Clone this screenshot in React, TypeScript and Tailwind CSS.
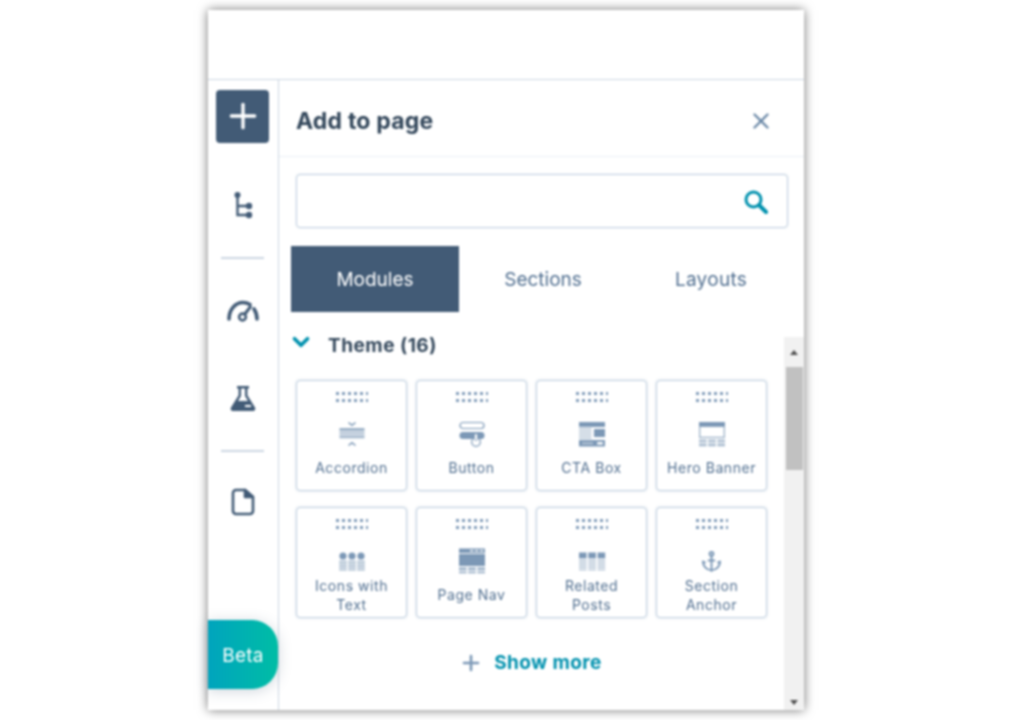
import { X, Plus, ChevronDown, Anchor } from "lucide-react";
import type { ReactNode } from "react";

const Dots = () => (
  <svg width="33" height="11" viewBox="0 0 33 11" fill="#7c98b6">
    {[0, 1].map((r) =>
      [0, 1, 2, 3, 4, 5].map((c) => (
        <rect key={`${r}-${c}`} x={c * 6 + 1} y={r * 7 + 1} width="3" height="3" rx="0.6" />
      ))
    )}
  </svg>
);

const Ic = ({ children }: { children: ReactNode }) => (
  <svg width="28" height="28" viewBox="0 0 28 28" fill="#7c98b6">
    {children}
  </svg>
);

const AccordionIcon = () => (
  <Ic>
    <path d="M10.500 2.500l3.500 2.800 3.500-2.800" fill="none" stroke="#7c98b6" strokeWidth="1.6" />
    <rect x="1.5" y="8" width="25" height="3" opacity=".75" />
    <rect x="1.5" y="11.8" width="25" height="2.4" opacity=".6" />
    <rect x="1.5" y="15" width="25" height="3.4" opacity=".6" />
    <path d="M10.500 25.500l3.500-2.800 3.500 2.800" fill="none" stroke="#7c98b6" strokeWidth="1.6" />
  </Ic>
);
const ButtonIcon = () => (
  <Ic>
    <rect x="2" y="2.5" width="24" height="6" rx="3" fill="none" stroke="#7c98b6" strokeWidth="1.2" />
    <rect x="1.500" y="12" width="25" height="7" rx="3.500" />
    <circle cx="18" cy="22" r="4.300" fill="#fff" stroke="#7c98b6" strokeWidth="1.2" />
    <rect x="16.500" y="13.500" width="3" height="7" rx="1.500" fill="#fff" stroke="#7c98b6" strokeWidth="0.8" />
  </Ic>
);
const CtaIcon = () => (
  <Ic>
    <rect x="1" y="2" width="26" height="5" />
    <rect x="1" y="8" width="12.5" height="1.6" opacity=".6" />
    <rect x="1" y="11" width="12.5" height="1.6" opacity=".6" />
    <rect x="1" y="14" width="12.5" height="1.6" opacity=".6" />
    <rect x="1" y="17" width="12.5" height="1.6" opacity=".6" />
    <rect x="16" y="9" width="11" height="8" />
    <path d="M1 20h26v6.5H1z" />
    <rect x="4" y="22.5" width="11" height="1.6" fill="#fff" opacity=".5" />
    <rect x="19" y="22" width="6" height="2.4" rx="1" fill="#fff" />
  </Ic>
);
const HeroIcon = () => (
  <Ic>
    <rect x="1" y="2" width="26" height="4.4" />
    <rect x="1.7" y="6.4" width="24.6" height="11" fill="none" stroke="#7c98b6" strokeWidth="1.3" opacity=".75" />
    <rect x="1" y="19.5" width="7.6" height="2.8" opacity=".6" />
    <rect x="10.2" y="19.5" width="7.6" height="2.8" opacity=".6" />
    <rect x="19.4" y="19.5" width="7.6" height="2.8" opacity=".6" />
    <rect x="1" y="23.4" width="7.6" height="3" opacity=".6" />
    <rect x="10.2" y="23.4" width="7.6" height="3" opacity=".6" />
    <rect x="19.4" y="23.4" width="7.6" height="3" opacity=".6" />
  </Ic>
);
const IconsTextIcon = () => (
  <Ic>
    {[5, 14, 23].map((x) => (
      <g key={x}>
        <circle cx={x} cy="9" r="3.6" />
        <rect x={x - 3.8} y="13.6" width="7.6" height="2" opacity=".6" />
        <rect x={x - 3.8} y="16.4" width="7.6" height="2" opacity=".6" />
        <rect x={x - 3.8} y="19.2" width="7.6" height="2" opacity=".6" />
        <rect x={x - 3.8} y="22" width="7.6" height="1.6" opacity=".6" />
      </g>
    ))}
  </Ic>
);
const PageNavIcon = () => (
  <Ic>
    <rect x="1" y="1.5" width="26" height="4.5" />
    <rect x="12" y="3" width="3.4" height="1.4" fill="#fff" />
    <rect x="17" y="3" width="3.4" height="1.4" fill="#fff" />
    <rect x="22" y="3" width="3.4" height="1.4" fill="#fff" />
    <rect x="1" y="7" width="26" height="12" />
    <rect x="1" y="20.5" width="7.6" height="2.5" opacity=".8" />
    <rect x="10.2" y="20.5" width="7.6" height="2.5" opacity=".8" />
    <rect x="19.4" y="20.5" width="7.6" height="2.5" opacity=".8" />
    <rect x="1" y="24" width="7.6" height="2.5" opacity=".6" />
    <rect x="10.2" y="24" width="7.6" height="2.5" opacity=".6" />
    <rect x="19.4" y="24" width="7.6" height="2.5" opacity=".6" />
  </Ic>
);
const RelatedIcon = () => (
  <Ic>
    {[1, 10.3, 19.6].map((x) => (
      <g key={x}>
        <rect x={x} y="5.5" width="7.6" height="6" />
        <rect x={x} y="13" width="7.6" height="1.7" opacity=".6" />
        <rect x={x} y="16" width="7.6" height="1.7" opacity=".6" />
        <rect x={x} y="19" width="7.6" height="1.7" opacity=".6" />
        <rect x={x} y="22" width="7.6" height="1.3" opacity=".6" />
      </g>
    ))}
  </Ic>
);
const AnchorIcon = () => <Anchor size={23} strokeWidth={2} className="text-[#7c98b6]" />;

const items: { label: ReactNode; icon: ReactNode }[] = [
  { label: "Accordion", icon: <AccordionIcon /> },
  { label: "Button", icon: <ButtonIcon /> },
  { label: "CTA Box", icon: <CtaIcon /> },
  { label: "Hero Banner", icon: <HeroIcon /> },
  { label: <>Icons with<br />Text</>, icon: <IconsTextIcon /> },
  { label: "Page Nav", icon: <PageNavIcon /> },
  { label: <>Related<br />Posts</>, icon: <RelatedIcon /> },
  { label: <>Section<br />Anchor</>, icon: <AnchorIcon /> },
];

const Card = ({ label, icon }: { label: ReactNode; icon: ReactNode }) => (
  <div className="h-[111px] w-[111px] rounded-[4px] border border-[#bfcfe0] bg-white shadow-[0_0_3px_rgba(124,152,182,0.3)] flex flex-col items-center pt-[10px]">
    <Dots />
    <div className="mt-[18px] h-[28px] flex items-center justify-center">{icon}</div>
    <div className="flex-1 flex items-center justify-center text-center text-[14px] leading-[19px] tracking-[0.55px] text-[#516f90] pb-[3px]">
      <span>{label}</span>
    </div>
  </div>
);

export default function App() {
  return (
    <div className="h-[720px] w-[1030px] bg-white flex justify-start pl-[208px] pt-[10px] overflow-hidden [font-family:Inter,'Noto_Sans',sans-serif]">
      <div className="w-[596px] h-[700px] bg-white shadow-[0_0_10px_rgba(0,0,0,0.55)] flex flex-col blur-[0.8px]">
        <div className="h-[70px] shrink-0 border-b border-[#cbd6e2]" />
        <div className="flex-1 flex min-h-0">
          {/* rail */}
          <div className="relative w-[71px] shrink-0 border-r border-[#cbd6e2] flex flex-col items-center">
            <button className="mt-[10px] ml-[-1px] h-[53px] w-[53px] rounded-[4px] bg-[#425b76] flex items-center justify-center text-white">
              <Plus size={40} strokeWidth={2} className="-mt-[1px]" />
            </button>
            <svg className="mt-[48px] ml-[-1px]" width="24" height="28" viewBox="0 0 24 28" fill="#425b76">
              <circle cx="6.500" cy="4" r="3" />
              <path d="M5.300 5h2.400v17.800h8v2.400H5.300zM7.700 13.800h8v2.400h-8z" />
              <circle cx="18" cy="15" r="3.200" />
              <circle cx="18" cy="24" r="3.200" />
            </svg>
            <div className="mt-[38px] ml-[-1px] h-[2px] w-[43px] bg-[#cbd6e2]" />
            <svg className="mt-[39px] ml-[-1px]" width="34" height="24" viewBox="0 0 34 24" fill="none" stroke="#425b76">
              <path d="M3 21C3 12 9 4.500 17 4.500c3 0 5 .8 7 2" strokeWidth="3.600" strokeLinecap="round" />
              <path d="M28 11c2 3 3 6 3 10" strokeWidth="3.600" strokeLinecap="round" />
              <circle cx="16.500" cy="19" r="3.400" strokeWidth="2.600" />
              <path d="M18.500 16.500L25 8" strokeWidth="3" />
            </svg>
            <svg className="mt-[61px] ml-[-1px]" width="30" height="30" viewBox="0 0 30 30">
              <path d="M9 3h12v2.400h-1.600v6.800L27 24.500c1 2-.3 3.500-2.300 3.500H5.300c-2 0-3.300-1.500-2.300-3.500l7.600-12.300V5.400H9z" fill="#425b76" />
              <path d="M13 5.400h4v7.600l3 5H10l3-5z" fill="#fff" />
              <rect x="17" y="22" width="6" height="2" fill="#fff" />
            </svg>
            <div className="mt-[37px] ml-[-1px] h-[2px] w-[43px] bg-[#cbd6e2]" />
            <svg className="mt-[36px] ml-[-1px]" width="24" height="28" viewBox="0 0 24 28" fill="none" stroke="#425b76" strokeWidth="2.600">
              <path d="M14 2H5a3 3 0 0 0-3 3v18a3 3 0 0 0 3 3h14a3 3 0 0 0 3-3V9z" strokeLinejoin="round" />
              <path d="M14 2v7h8z" fill="#425b76" strokeLinejoin="round" />
            </svg>
            <div className="absolute left-0 bottom-[21px] h-[69px] w-[70px] pt-[3px] rounded-r-[26px] bg-gradient-to-r from-[#00a4bd] to-[#00bda5] shadow-[0_2px_14px_rgba(66,91,118,0.25)] flex items-center justify-center text-[19px] tracking-[0.3px] text-white">
              Beta
            </div>
          </div>
          {/* main */}
          <div className="flex-1 min-w-0 flex flex-col">
            <div className="h-[77px] shrink-0 border-b border-[#eaf0f6] flex items-center justify-between pl-[17px] pr-[30px] pt-[6px]">
              <span className="text-[23px] font-bold text-[#33475b] tracking-[0.2px]">Add to page</span>
              <X size={26} strokeWidth={2.2} className="text-[#6d8aa8]" />
            </div>
            <div className="ml-[17px] mr-[16px] mt-[17px] h-[54px] shrink-0 rounded-[4px] border border-[#bfcfe0] bg-white flex items-center justify-end pr-[19px] shadow-[0_0_2px_rgba(203,214,226,0.5)]">
              <svg width="24" height="24" viewBox="0 0 24 24" fill="none" stroke="#0091ae" className="mt-[1px]">
                <circle cx="9.500" cy="9.500" r="7.500" strokeWidth="3" />
                <path d="M15 15l7 7" strokeWidth="4" strokeLinecap="round" />
              </svg>
            </div>
            <div className="ml-[12px] mt-[18px] h-[66px] shrink-0 flex text-[19px]">
              <div className="w-[168px] pt-[2px] bg-[#425b76] text-white flex items-center justify-center">Modules</div>
              <div className="w-[168px] pt-[2px] text-[#516f90] flex items-center justify-center">Sections</div>
              <div className="w-[168px] pt-[2px] text-[#516f90] flex items-center justify-center tracking-[0.3px]">Layouts</div>
            </div>
            <div className="mt-[25px] flex-1 min-h-0 flex">
              <div className="flex-1 min-w-0 flex flex-col">
                <div className="ml-[9px] h-[17px] flex items-center">
                  <ChevronDown size={26} strokeWidth={3.4} className="text-[#0091ae] -mt-[7px]" />
                  <span className="ml-[14px] pt-[2px] text-[19px] font-bold tracking-[0.5px] text-[#33475b]">Theme (16)</span>
                </div>
                <div className="mt-[26px] ml-[17px] grid grid-cols-[repeat(4,111px)] gap-x-[9px] gap-y-[16px]">
                  {items.map((it, i) => (
                    <Card key={i} label={it.label} icon={it.icon} />
                  ))}
                </div>
                <div className="mt-[31px] flex items-center justify-center gap-[11px] pr-[2px]">
                  <Plus size={24} strokeWidth={2.6} className="text-[#7c98b6]" />
                  <span className="text-[19px] font-bold tracking-[0.4px] text-[#0091ae]">Show more</span>
                </div>
              </div>
              <div className="w-[20px] shrink-0 bg-[#f1f1f1] flex flex-col items-center">
                <div className="h-[30px] shrink-0 flex items-center justify-center">
                  <div className="w-0 h-0 border-x-[4px] border-x-transparent border-b-[5px] border-b-[#505050]" />
                </div>
                <div className="h-[103px] w-[17px] bg-[#c1c1c1]" />
                <div className="mt-auto h-[16px] shrink-0 flex items-center justify-center">
                  <div className="w-0 h-0 border-x-[4px] border-x-transparent border-t-[5px] border-t-[#505050]" />
                </div>
              </div>
            </div>
          </div>
        </div>
      </div>
    </div>
  );
}
